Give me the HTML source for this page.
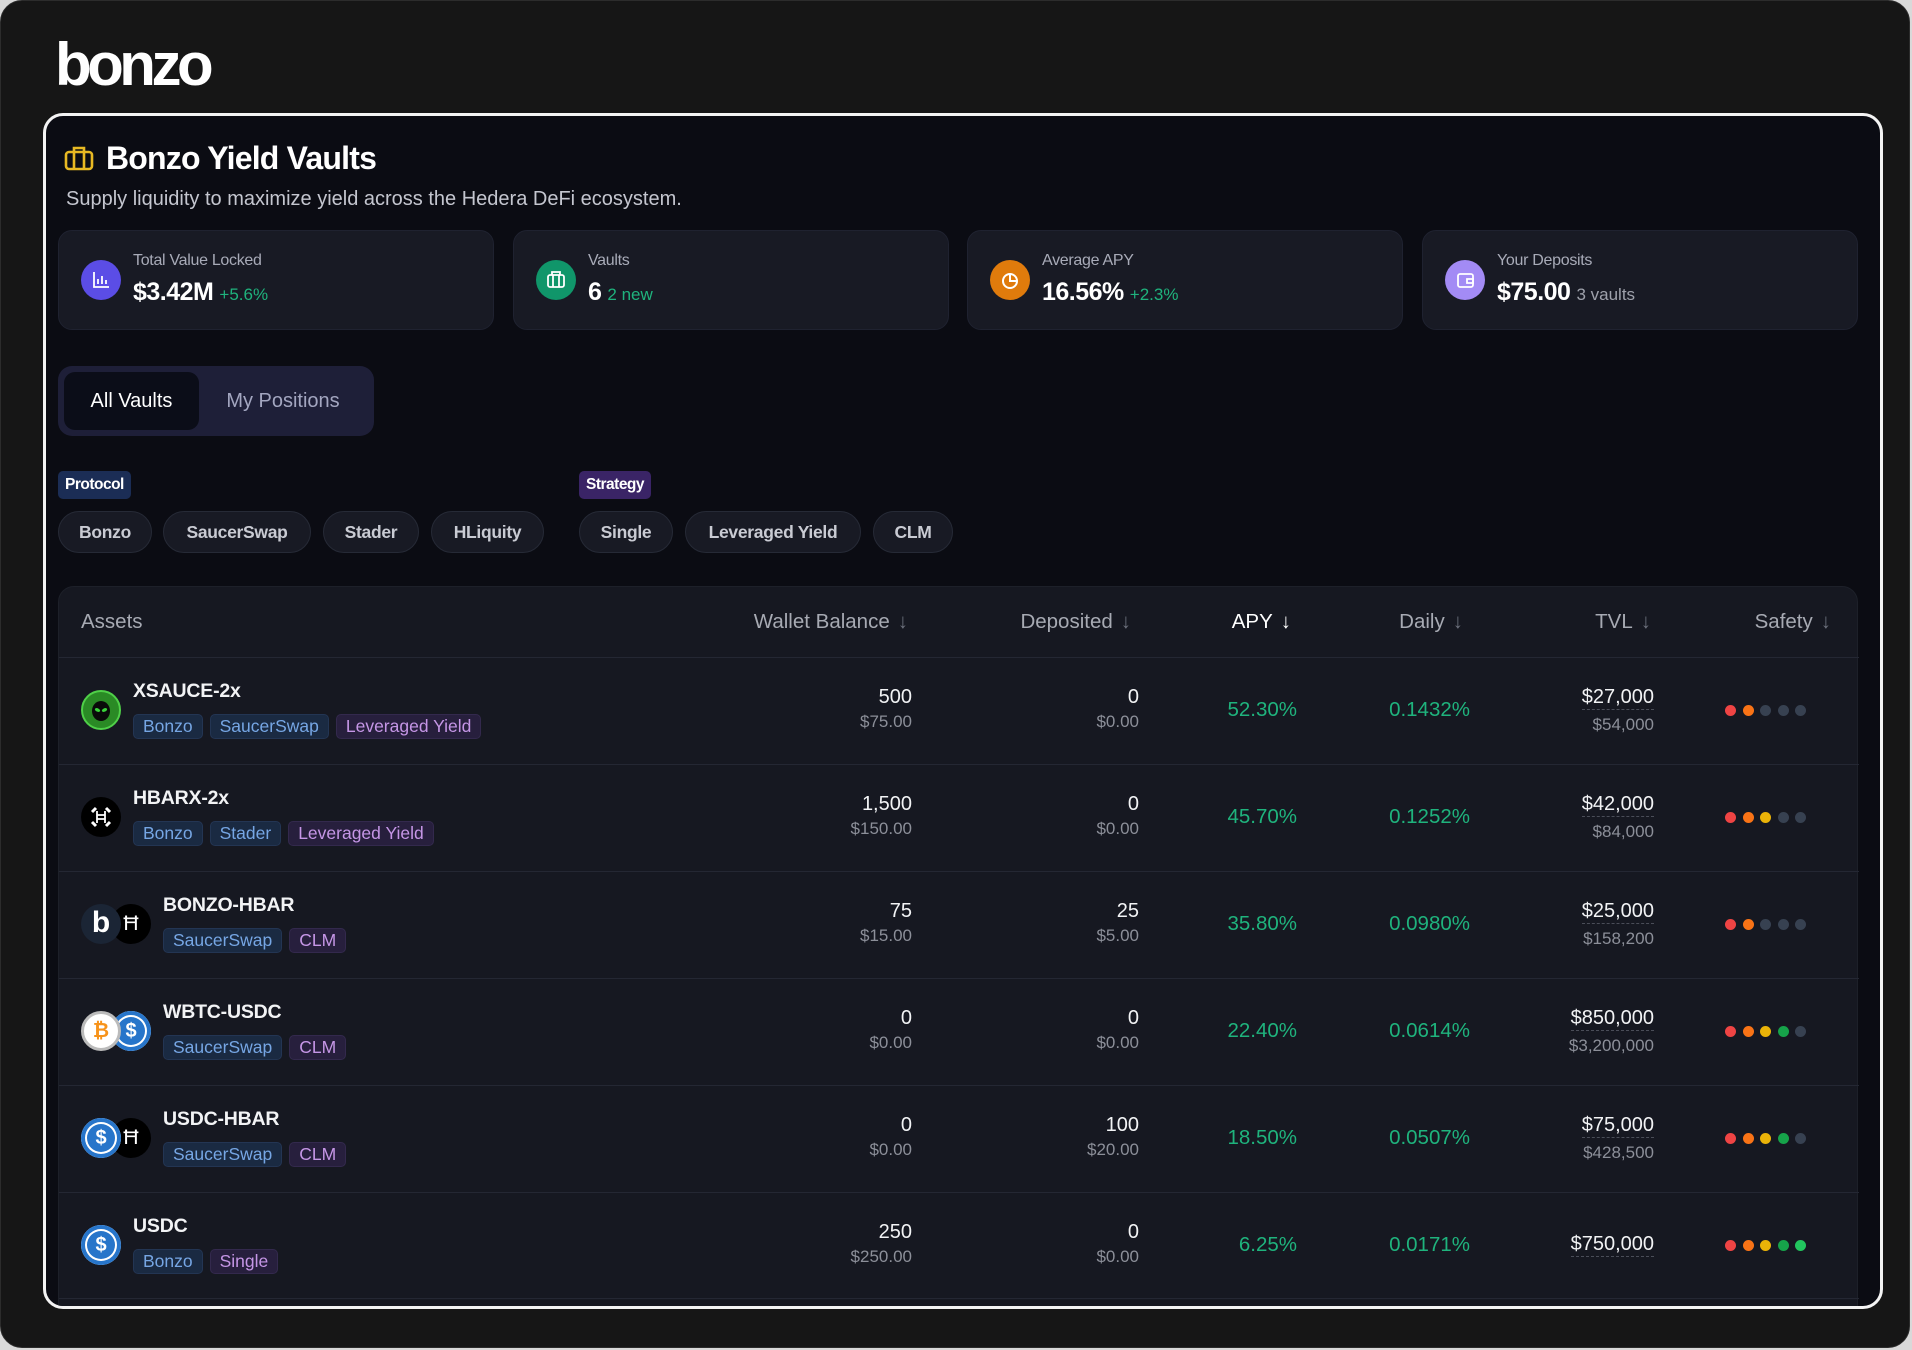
<!DOCTYPE html>
<html><head><meta charset="utf-8"><style>
*{box-sizing:border-box;margin:0;padding:0}
html,body{width:1912px;height:1350px;overflow:hidden;background:#d9d9d9;font-family:"Liberation Sans",sans-serif}
.frame{position:absolute;left:0;top:0;width:1910px;height:1348px;background:#161616;border-radius:22px;border:1px solid #2c2c2c}
.logo{position:absolute;left:54px;top:26px;color:#fff;font-size:60px;font-weight:bold;letter-spacing:-4.5px;line-height:76px}
.panel{position:absolute;left:42px;top:112px;width:1840px;height:1196px;border:3px solid #f4f4f4;border-radius:20px;background:#0b0c13;overflow:hidden}
.abs{position:absolute}
.title{left:60px;top:24px;color:#fff;font-size:32px;font-weight:bold;letter-spacing:-0.8px;white-space:nowrap}
.sub{left:20px;top:72px;color:#c4c6cf;font-size:20px;white-space:nowrap}
.card{position:absolute;top:114px;width:436px;height:100px;background:#181a24;border-radius:14px;border:1px solid #1f2230}
.ic{position:absolute;left:22px;top:29px;width:40px;height:40px;border-radius:50%}
.lbl{position:absolute;left:74px;top:21px;color:#a8abb8;font-size:16px;letter-spacing:-0.3px}
.val{position:absolute;left:74px;top:47px;color:#fff;font-size:25px;font-weight:bold;white-space:nowrap;letter-spacing:-0.5px}
.val span{font-size:17px;font-weight:normal;margin-left:6px;letter-spacing:0}
.g{color:#1fb37d}
.tabs{left:12px;top:250px;width:316px;height:70px;background:#1e1f38;border-radius:14px}
.tab{position:absolute;top:6px;height:58px;line-height:58px;font-size:20px;border-radius:11px;text-align:center}
.flab{top:355px;height:28px;line-height:28px;padding:0 7px;font-size:15.5px;font-weight:bold;border-radius:5px;color:#fff;letter-spacing:-0.5px}
.chip{position:absolute;top:395px;height:42px;line-height:40px;border-radius:21px;background:#181a24;border:1px solid #262a36;color:#c9cbd3;font-size:17.5px;font-weight:bold;letter-spacing:-0.3px;text-align:center}
.table{position:absolute;left:12px;top:470px;width:1800px;height:760px;background:#161821;border-radius:16px;border:1px solid #1d2029}
.th{position:absolute;top:23px;color:#a7aab3;font-size:20.5px;white-space:nowrap}
.th b{font-weight:normal;color:#6b6f7b;margin-left:8px}
.row{position:absolute;left:0;width:1800px;height:107px;border-top:1.5px solid #242733}
.name{position:absolute;top:22px;color:#f2f3f5;font-size:19.5px;font-weight:bold;letter-spacing:-0.2px}
.tags{position:absolute;top:56px;display:flex;gap:7px}
.t{height:25px;line-height:23px;padding:0 9px;font-size:17.5px;border-radius:5px;border:1px solid}
.tb{background:#1a2a42;color:#76a6e4;border-color:#233553}
.tp{background:#271f3d;color:#c596e6;border-color:#33294d}
.num{position:absolute;text-align:right;white-space:nowrap}
.v1{top:28px;color:#f2f3f5;font-size:20px}
.v2{top:54px;color:#8c8f99;font-size:17px}
.pc{top:40px;color:#1fb37d;font-size:20.5px}
.tv{border-bottom:1.5px dashed #4a4d58;padding-bottom:1px}
.dots{position:absolute;left:1666px;top:47px;display:flex;gap:6.5px}
.dots i{width:11px;height:11px;border-radius:50%;display:block}
.R{background:#ef4444}.O{background:#f97316}.Y{background:#eab308}.G{background:#16a34a}.L{background:#22c55e}.N{background:#374151}
.coin{position:absolute;width:40px;height:40px;border-radius:50%;top:32px}
</style></head><body>
<div class="frame">
<div class="logo">bonzo</div>
<div class="panel">
 <svg class="abs" style="left:18px;top:29px" width="30" height="26" viewBox="0 0 30 26" fill="none" stroke="#e8b923" stroke-width="2.6"><rect x="2" y="7" width="26" height="17" rx="3"/><path d="M10 7V3h10v4M10 7v17M20 7v17"/></svg>
 <div class="abs title">Bonzo Yield Vaults</div>
 <div class="abs sub">Supply liquidity to maximize yield across the Hedera DeFi ecosystem.</div>

 <div class="card" style="left:12px"><div class="ic" style="background:#5b4de6"><svg width="40" height="40" viewBox="0 0 40 40" fill="none" stroke="#fff" stroke-width="1.8"><path d="M13 12v15h15M17 24v-5M21 24v-8M25 24v-4"/></svg></div><div class="lbl">Total Value Locked</div><div class="val">$3.42M<span class="g">+5.6%</span></div></div>
 <div class="card" style="left:467px"><div class="ic" style="background:#10966a"><svg width="40" height="40" viewBox="0 0 40 40" fill="none" stroke="#fff" stroke-width="1.8"><rect x="12" y="15" width="16" height="12" rx="2"/><path d="M16 15v-3h8v3M17 15v12M23 15v12"/></svg></div><div class="lbl">Vaults</div><div class="val">6<span class="g">2 new</span></div></div>
 <div class="card" style="left:921px"><div class="ic" style="background:#e07b0c"><svg width="40" height="40" viewBox="0 0 40 40" fill="none" stroke="#fff" stroke-width="2"><circle cx="20" cy="21" r="7"/><path d="M20 14v7h7"/></svg></div><div class="lbl">Average APY</div><div class="val">16.56%<span class="g">+2.3%</span></div></div>
 <div class="card" style="left:1376px"><div class="ic" style="background:#a38bf5"><svg width="40" height="40" viewBox="0 0 40 40" fill="none" stroke="#fff" stroke-width="1.8"><rect x="13" y="14" width="15" height="13" rx="2"/><path d="M22 19h6v4h-6z"/></svg></div><div class="lbl">Your Deposits</div><div class="val">$75.00<span style="color:#9ea1ab">3 vaults</span></div></div>

 <div class="abs tabs"><div class="tab" style="left:6px;width:135px;background:#0b0d18;color:#fff">All Vaults</div><div class="tab" style="left:145px;width:160px;color:#a3a6c0">My Positions</div></div>

 <div class="abs flab" style="left:12px;background:#1b2d55">Protocol</div>
 <div class="abs flab" style="left:533px;background:#3a2466">Strategy</div>
 <div class="chip" style="left:12px;width:94px">Bonzo</div>
 <div class="chip" style="left:117px;width:148px">SaucerSwap</div>
 <div class="chip" style="left:277px;width:96px">Stader</div>
 <div class="chip" style="left:385px;width:113px">HLiquity</div>
 <div class="chip" style="left:533px;width:94px">Single</div>
 <div class="chip" style="left:639px;width:176px">Leveraged Yield</div>
 <div class="chip" style="left:827px;width:80px">CLM</div>

 <div class="table">
  <div class="th" style="left:22px">Assets</div>
  <div class="th" style="right:949px">Wallet Balance<b>↓</b></div>
  <div class="th" style="right:726px">Deposited<b>↓</b></div>
  <div class="th" style="right:566px;color:#fff">APY<b style="color:#fff">↓</b></div>
  <div class="th" style="right:394px">Daily<b>↓</b></div>
  <div class="th" style="right:206px">TVL<b>↓</b></div>
  <div class="th" style="right:26px">Safety<b>↓</b></div>

  <div class="row" style="top:70px">
   <div class="coin" style="left:22px;background:#2a8a25;border:2px solid #4fd048"><svg width="36" height="36" viewBox="0 0 36 36"><ellipse cx="18" cy="19" rx="9" ry="10" fill="#0a0a0a"/><ellipse cx="14.5" cy="18" rx="2.8" ry="1.7" fill="#39d33a" transform="rotate(25 14.5 18)"/><ellipse cx="21.5" cy="18" rx="2.8" ry="1.7" fill="#39d33a" transform="rotate(-25 21.5 18)"/></svg></div>
   <div class="name" style="left:74px">XSAUCE-2x</div>
   <div class="tags" style="left:74px"><span class="t tb">Bonzo</span><span class="t tb">SaucerSwap</span><span class="t tp">Leveraged Yield</span></div>
   <div class="num v1" style="right:947px">500</div><div class="num v2" style="right:947px">$75.00</div>
   <div class="num v1" style="right:720px">0</div><div class="num v2" style="right:720px">$0.00</div>
   <div class="num pc" style="right:562px">52.30%</div>
   <div class="num pc" style="right:389px">0.1432%</div>
   <div class="num v1" style="right:205px"><span class="tv">$27,000</span></div><div class="num v2" style="right:205px;top:57px">$54,000</div>
   <div class="dots"><i class="R"></i><i class="O"></i><i class="N"></i><i class="N"></i><i class="N"></i></div>
  </div>
  <div class="row" style="top:177px">
   <div class="coin" style="left:22px;background:#000"><svg width="40" height="40" viewBox="0 0 40 40" fill="none" stroke="#fff" stroke-width="3"><path d="M11 15l4-4M29 15l-4-4M11 25l4 4M29 25l-4 4"/><path d="M16 14v12M24 14v12M16 18h8M16 22h8" stroke-width="1.8"/></svg></div>
   <div class="name" style="left:74px">HBARX-2x</div>
   <div class="tags" style="left:74px"><span class="t tb">Bonzo</span><span class="t tb">Stader</span><span class="t tp">Leveraged Yield</span></div>
   <div class="num v1" style="right:947px">1,500</div><div class="num v2" style="right:947px">$150.00</div>
   <div class="num v1" style="right:720px">0</div><div class="num v2" style="right:720px">$0.00</div>
   <div class="num pc" style="right:562px">45.70%</div>
   <div class="num pc" style="right:389px">0.1252%</div>
   <div class="num v1" style="right:205px"><span class="tv">$42,000</span></div><div class="num v2" style="right:205px;top:57px">$84,000</div>
   <div class="dots"><i class="R"></i><i class="O"></i><i class="Y"></i><i class="N"></i><i class="N"></i></div>
  </div>
  <div class="row" style="top:284px">
   <div class="coin" style="left:52px;background:#000;color:#fff;text-align:center;line-height:40px;font-size:21px">Ħ</div>
   <div class="coin" style="left:22px;background:#1b2535;color:#fff;text-align:center;line-height:38px;font-size:30px;font-weight:bold">b</div>
   <div class="name" style="left:104px">BONZO-HBAR</div>
   <div class="tags" style="left:104px"><span class="t tb">SaucerSwap</span><span class="t tp">CLM</span></div>
   <div class="num v1" style="right:947px">75</div><div class="num v2" style="right:947px">$15.00</div>
   <div class="num v1" style="right:720px">25</div><div class="num v2" style="right:720px">$5.00</div>
   <div class="num pc" style="right:562px">35.80%</div>
   <div class="num pc" style="right:389px">0.0980%</div>
   <div class="num v1" style="right:205px"><span class="tv">$25,000</span></div><div class="num v2" style="right:205px;top:57px">$158,200</div>
   <div class="dots"><i class="R"></i><i class="O"></i><i class="N"></i><i class="N"></i><i class="N"></i></div>
  </div>
  <div class="row" style="top:391px">
   <div class="coin" style="left:52px;background:#2775ca;color:#fff;text-align:center;line-height:40px;font-size:20px;font-weight:bold;box-shadow:inset 0 0 0 4px #2775ca,inset 0 0 0 6px #fff">$</div>
   <div class="coin" style="left:22px;background:#fff;border:3px solid #bbb;color:#f7931a;text-align:center;line-height:34px;font-size:20px;font-weight:bold">₿</div>
   <div class="name" style="left:104px">WBTC-USDC</div>
   <div class="tags" style="left:104px"><span class="t tb">SaucerSwap</span><span class="t tp">CLM</span></div>
   <div class="num v1" style="right:947px">0</div><div class="num v2" style="right:947px">$0.00</div>
   <div class="num v1" style="right:720px">0</div><div class="num v2" style="right:720px">$0.00</div>
   <div class="num pc" style="right:562px">22.40%</div>
   <div class="num pc" style="right:389px">0.0614%</div>
   <div class="num v1" style="right:205px"><span class="tv">$850,000</span></div><div class="num v2" style="right:205px;top:57px">$3,200,000</div>
   <div class="dots"><i class="R"></i><i class="O"></i><i class="Y"></i><i class="G"></i><i class="N"></i></div>
  </div>
  <div class="row" style="top:498px">
   <div class="coin" style="left:52px;background:#000;color:#fff;text-align:center;line-height:40px;font-size:21px">Ħ</div>
   <div class="coin" style="left:22px;background:#2775ca;color:#fff;text-align:center;line-height:40px;font-size:20px;font-weight:bold;box-shadow:inset 0 0 0 4px #2775ca,inset 0 0 0 6px #fff">$</div>
   <div class="name" style="left:104px">USDC-HBAR</div>
   <div class="tags" style="left:104px"><span class="t tb">SaucerSwap</span><span class="t tp">CLM</span></div>
   <div class="num v1" style="right:947px">0</div><div class="num v2" style="right:947px">$0.00</div>
   <div class="num v1" style="right:720px">100</div><div class="num v2" style="right:720px">$20.00</div>
   <div class="num pc" style="right:562px">18.50%</div>
   <div class="num pc" style="right:389px">0.0507%</div>
   <div class="num v1" style="right:205px"><span class="tv">$75,000</span></div><div class="num v2" style="right:205px;top:57px">$428,500</div>
   <div class="dots"><i class="R"></i><i class="O"></i><i class="Y"></i><i class="G"></i><i class="N"></i></div>
  </div>
  <div class="row" style="top:605px;border-bottom:1.5px solid #242733">
   <div class="coin" style="left:22px;background:#2775ca;color:#fff;text-align:center;line-height:40px;font-size:20px;font-weight:bold;box-shadow:inset 0 0 0 4px #2775ca,inset 0 0 0 6px #fff">$</div>
   <div class="name" style="left:74px">USDC</div>
   <div class="tags" style="left:74px"><span class="t tb">Bonzo</span><span class="t tp">Single</span></div>
   <div class="num v1" style="right:947px">250</div><div class="num v2" style="right:947px">$250.00</div>
   <div class="num v1" style="right:720px">0</div><div class="num v2" style="right:720px">$0.00</div>
   <div class="num pc" style="right:562px">6.25%</div>
   <div class="num pc" style="right:389px">0.0171%</div>
   <div class="num v1" style="right:205px;top:40px"><span class="tv">$750,000</span></div>
   <div class="dots"><i class="R"></i><i class="O"></i><i class="Y"></i><i class="G"></i><i class="L"></i></div>
  </div>
 </div>
</div>
</div>
</body></html>
